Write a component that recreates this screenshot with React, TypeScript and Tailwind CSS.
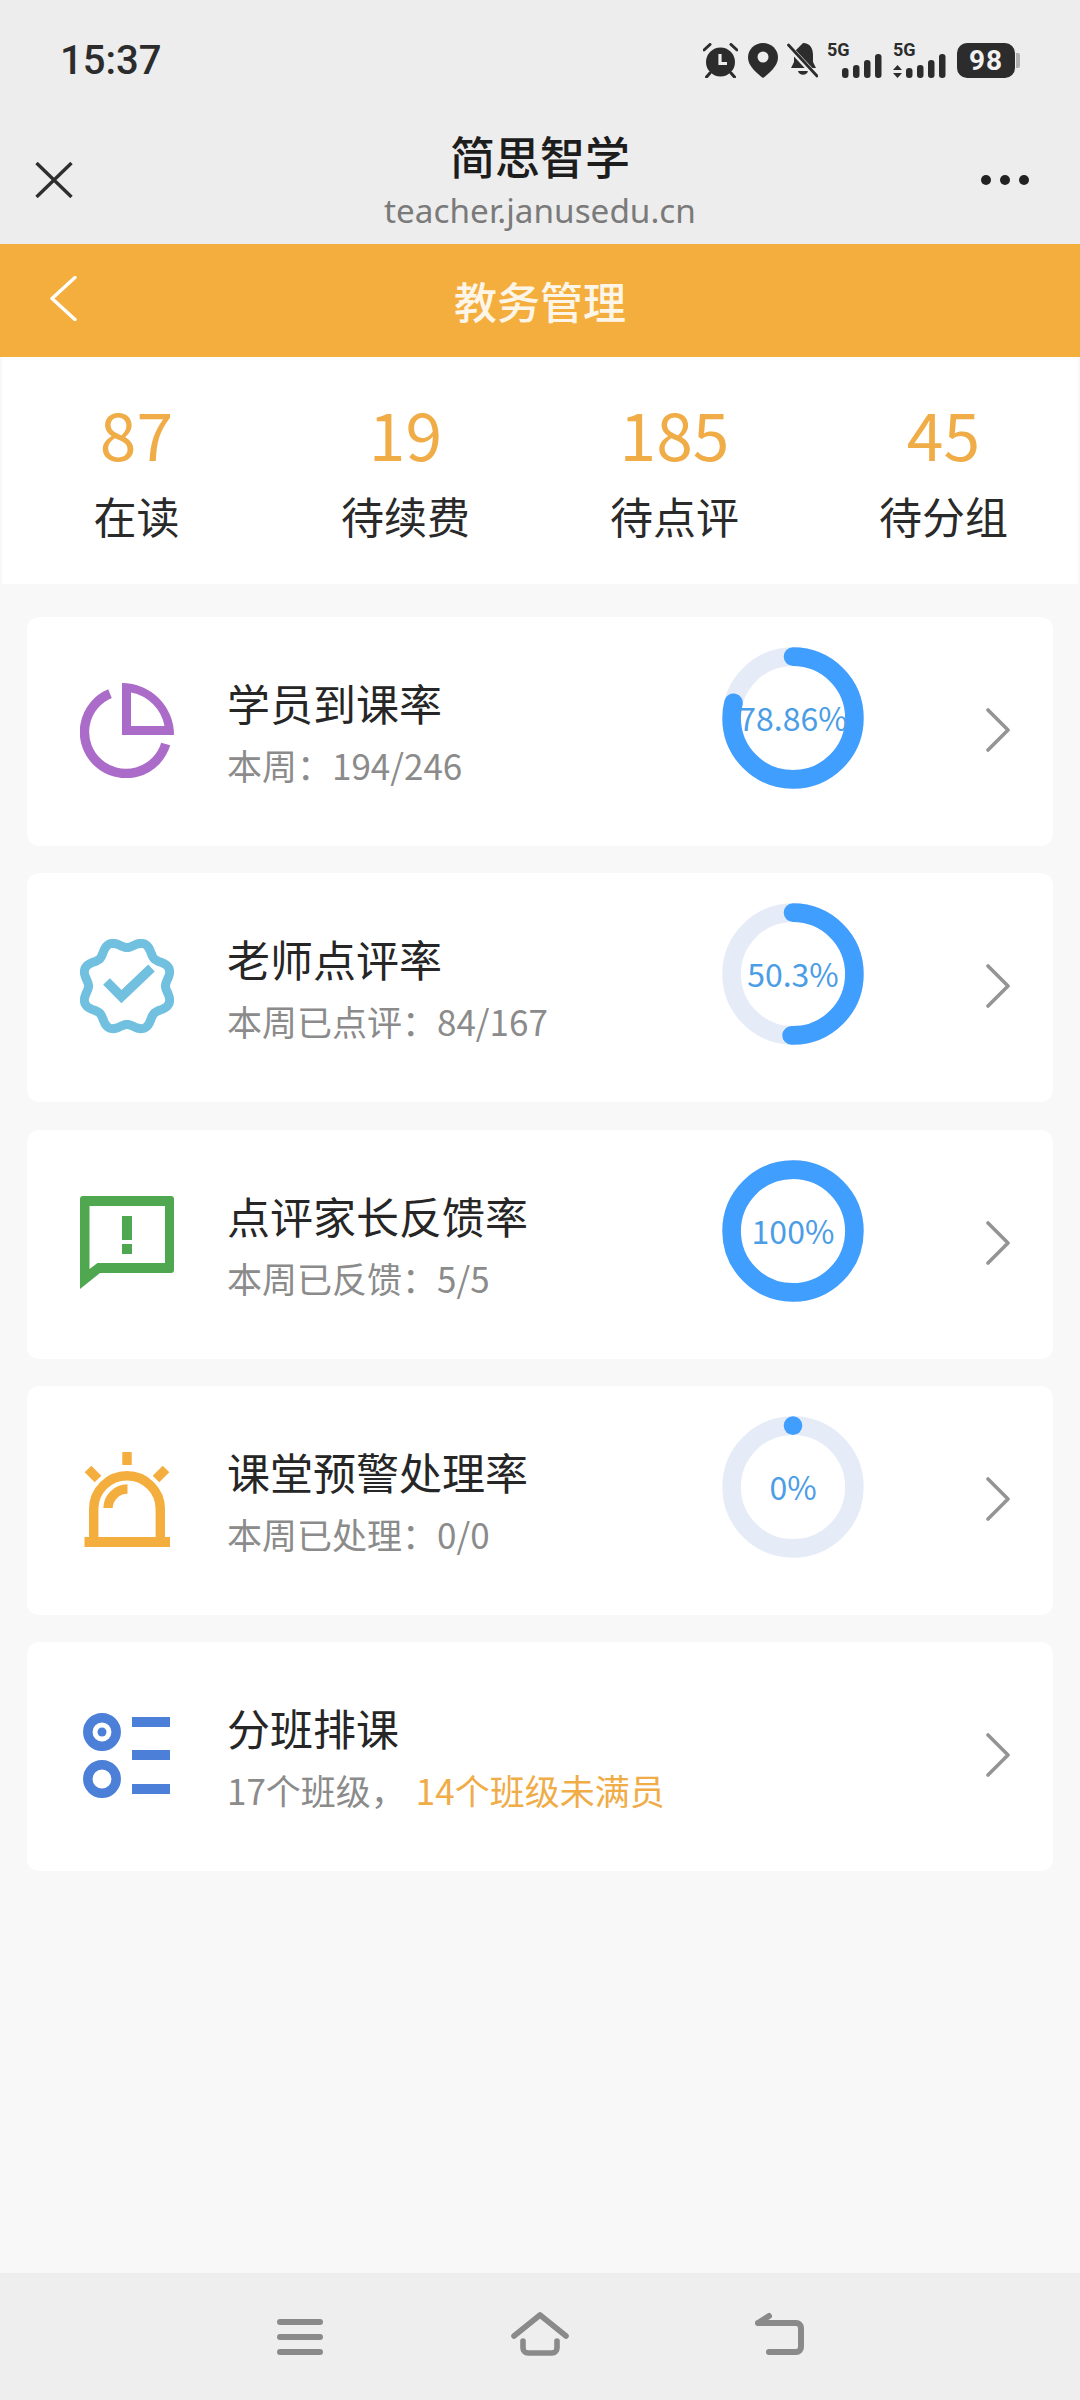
import type { ReactNode } from "react";

const FONT = "font-['Noto_Sans_CJK_SC','Noto_Sans',sans-serif]";

function Alarm() {
  return (
    <svg width="35" height="35" viewBox="0 0 35 35">
      <circle cx="17.5" cy="19" r="14.5" fill="#2c2c2c" />
      <path d="M1 7 L7 1.5 M34 7 L28 1.5 M7 30 L3.5 34 M28 30 L31.5 34" stroke="#2c2c2c" strokeWidth="3" strokeLinecap="round" />
      <path d="M17 11 V20.5 H24" stroke="#ededed" strokeWidth="3.2" fill="none" />
    </svg>
  );
}

function Pin() {
  return (
    <svg width="30" height="35" viewBox="0 0 30 35">
      <path d="M15 0 C23.5 0 30 6.5 30 14.5 C30 23 21 30.5 15 35 C9 30.5 0 23 0 14.5 C0 6.5 6.5 0 15 0 Z" fill="#2c2c2c" />
      <circle cx="15" cy="14" r="5.5" fill="#ededed" />
    </svg>
  );
}

function MutedBell() {
  return (
    <svg width="31" height="35" viewBox="0 0 31 35">
      <path d="M16 0 C23 0 26 5 26 12 V19 L29 25 H4 L7 19 V9 Z" fill="#2c2c2c" />
      <path d="M11 28 H21 C20 33 12 33 11 28 Z" fill="#2c2c2c" />
      <path d="M1 3 L29 33" stroke="#ededed" strokeWidth="5.5" />
      <path d="M1.5 2 L30 33" stroke="#2c2c2c" strokeWidth="2.8" strokeLinecap="round" />
    </svg>
  );
}

function SignalGroup({ arrows }: { arrows?: boolean }) {
  const bars = [
    { x: 0, y: 15, h: 10 },
    { x: 11, y: 12, h: 13 },
    { x: 22, y: 7, h: 18 },
    { x: 33, y: 1, h: 24 },
  ];
  return (
    <div className={`grid h-[35px] ${arrows ? "w-[53px]" : "w-[55px]"}`}>
      <span className="col-start-1 row-start-1 self-start justify-self-start font-['Roboto',sans-serif] text-[18px] leading-[14px] font-bold text-[#2c2c2c]">
        5G
      </span>
      <div className="col-start-1 row-start-1 flex items-end justify-between self-end">
        {arrows ? (
          <svg width="9" height="13" viewBox="0 0 9 13">
            <path d="M4.5 0 L9 5 H0 Z M0 8 H9 L4.5 13 Z" fill="#2c2c2c" />
          </svg>
        ) : (
          <span />
        )}
        <svg width="40" height="25" viewBox="0 0 40 25">
          {bars.map((b) => (
            <rect key={b.x} x={b.x} y={b.y} width="6.5" height={b.h} rx="3" fill="#2c2c2c" />
          ))}
        </svg>
      </div>
    </div>
  );
}

function Battery() {
  return (
    <div className="flex items-center">
      <div className="flex h-[35px] w-[58px] items-center justify-center rounded-[10px] bg-[#2c2c2c] font-['Roboto',sans-serif] text-[28px] font-bold tracking-[1px] text-[#f2f2f2]">
        98
      </div>
      <div className="ml-[1px] h-[15px] w-[4px] rounded-r-[2px] bg-[#b0b0b0]" />
    </div>
  );
}

function StatusBar() {
  return (
    <div className="flex h-[120px] items-start justify-between pt-[43px] pr-[60px] pl-[60px]">
      <span className="font-['Roboto',sans-serif] text-[40px] leading-[35px] font-medium text-[#2c2c2c]">15:37</span>
      <div className="flex items-start">
        <Alarm />
        <div className="ml-[10px]">
          <Pin />
        </div>
        <div className="ml-[9px]">
          <MutedBell />
        </div>
        <div className="ml-[9px]">
          <SignalGroup />
        </div>
        <div className="ml-[11px]">
          <SignalGroup arrows />
        </div>
        <div className="ml-[11px]">
          <Battery />
        </div>
      </div>
    </div>
  );
}

function WebViewBar() {
  return (
    <div className="grid h-[124px] grid-cols-[110px_1fr_110px] items-start">
      <div className="pt-[42px] pl-[35px]">
        <svg width="38" height="36" viewBox="0 0 38 36">
          <path d="M1.5 1 L36.5 35 M36.5 1 L1.5 35" stroke="#2e2e2e" strokeWidth="3.4" />
        </svg>
      </div>
      <div className="flex flex-col items-center">
        <span className="mt-[3px] text-[45px] leading-[66px] font-medium text-[#1d1d1d]">简思智学</span>
        <span className="mt-[-2px] font-['Noto_Sans',sans-serif] text-[33.3px] leading-[46px] text-[#7a7a7a]">teacher.janusedu.cn</span>
      </div>
      <div className="flex justify-end pt-[54px] pr-[50px]">
        <svg width="50" height="12" viewBox="0 0 50 12">
          <circle cx="6" cy="6" r="5" fill="#222" />
          <circle cx="25" cy="6" r="5" fill="#222" />
          <circle cx="44" cy="6" r="5" fill="#222" />
        </svg>
      </div>
    </div>
  );
}

function PageHeader() {
  return (
    <div className="grid h-[113px] grid-cols-[110px_1fr_110px] items-center bg-[#f4ae3e]">
      <div className="pb-[5px] pl-[50px]">
        <svg width="27" height="45" viewBox="0 0 27 45">
          <path d="M25 1.5 L2 22.5 L25 43.5" fill="none" stroke="#ffffff" strokeWidth="3.4" strokeLinecap="round" strokeLinejoin="round" />
        </svg>
      </div>
      <div className="mt-[-2px] text-center text-[43px] leading-[60px] font-medium text-[#fdf6e8]">教务管理</div>
      <div />
    </div>
  );
}

const STATS = [
  { value: "87", label: "在读" },
  { value: "19", label: "待续费" },
  { value: "185", label: "待点评" },
  { value: "45", label: "待分组" },
];

function StatsRow() {
  return (
    <div className="mx-[2px] grid h-[227px] grid-cols-4 bg-white pt-[27px]">
      {STATS.map((s) => (
        <div key={s.label} className="flex flex-col items-center">
          <span className="text-[66px] leading-[96px] text-[#efac47]">{s.value}</span>
          <span className="mt-[5px] text-[43px] leading-[60px] text-[#2a2a2a]">{s.label}</span>
        </div>
      ))}
    </div>
  );
}

function PieIcon() {
  return (
    <svg width="94" height="95" viewBox="0 0 94 95">
      <path d="M30 10.7 A41.5 41.5 0 1 0 85.7 61" fill="none" stroke="#ab6bc8" strokeWidth="9.4" />
      <path fillRule="evenodd" d="M42 0 A52 52 0 0 1 94 52 H42 Z M51 9.5 V43 H84.5 A42 42 0 0 0 51 9.5 Z" fill="#ab6bc8" />
    </svg>
  );
}

// Eight-lobed seal outline, sampled around the centre of the icon.
function sealPath() {
  const pts: string[] = [];
  for (let i = 0; i < 240; i++) {
    const a = (i / 240) * Math.PI * 2;
    const r = 42 + 3.5 * Math.cos(8 * (a - Math.PI / 8));
    pts.push(`${(47 + r * Math.cos(a)).toFixed(2)} ${(47 + r * Math.sin(a)).toFixed(2)}`);
  }
  return `M${pts.join(" L")} Z`;
}

function SealIcon() {
  return (
    <svg width="94" height="95" viewBox="0 0 94 95">
      <path d={sealPath()} fill="none" stroke="#72c0e0" strokeWidth="9" />
      <path d="M26.5 42.5 L41.5 57.5 L71.5 29" fill="none" stroke="#72c0e0" strokeWidth="9.5" />
    </svg>
  );
}

function FeedbackIcon() {
  return (
    <svg width="94" height="95" viewBox="0 0 94 95">
      <path
        fillRule="evenodd"
        d="M3 0 H91 A3 3 0 0 1 94 3 V74 A3 3 0 0 1 91 77 H20 L0 93 V3 A3 3 0 0 1 3 0 Z M9.5 10 V73 L17.5 67 H85 V10 Z"
        fill="#4fa84f"
      />
      <rect x="42" y="20" width="10" height="24" fill="#4fa84f" />
      <rect x="42" y="48" width="10" height="10" fill="#4fa84f" />
    </svg>
  );
}

function BeaconIcon() {
  return (
    <svg width="94" height="95" viewBox="0 0 94 95">
      <g fill="none" stroke="#f4ae3e" strokeWidth="9.4">
        <path d="M13.7 86 V57 A33.3 33.3 0 0 1 80.3 57 V86" />
        <path d="M28 56 A19.5 19.5 0 0 1 47.5 37" />
        <path d="M47 0 V13" />
        <path d="M8 17 L18 27" />
        <path d="M86 17 L76 27" />
      </g>
      <rect x="4.5" y="85" width="85.5" height="10" fill="#f4ae3e" />
    </svg>
  );
}

function ScheduleIcon() {
  return (
    <svg width="94" height="95" viewBox="0 0 94 95">
      <g fill="none" stroke="#4c80d8" strokeWidth="9.5">
        <circle cx="22" cy="24" r="14.2" />
        <circle cx="22" cy="71" r="14.2" />
      </g>
      <circle cx="22" cy="24" r="4.5" fill="#4c80d8" />
      <rect x="52" y="9" width="38" height="10" fill="#4c80d8" />
      <rect x="52" y="42" width="38" height="10" fill="#4c80d8" />
      <rect x="52" y="76" width="38" height="10" fill="#4c80d8" />
    </svg>
  );
}

function Ring({ percent, label }: { percent: number; label: string }) {
  const r = 61.4;
  const circ = 2 * Math.PI * r;
  const full = percent >= 100;
  return (
    <div className="mt-[30px] grid h-[142px] w-[142px] place-items-center">
      <svg className="col-start-1 row-start-1" width="142" height="142" viewBox="0 0 142 142">
        <circle cx="71" cy="71" r={r} fill="none" stroke="#e6ecf7" strokeWidth="18.6" />
        <circle
          cx="71"
          cy="71"
          r={r}
          fill="none"
          stroke="#409eff"
          strokeWidth="18.6"
          strokeLinecap={full ? "butt" : "round"}
          strokeDasharray={`${(circ * percent) / 100} ${circ}`}
          transform="rotate(-90 71 71)"
        />
      </svg>
      <span className="col-start-1 row-start-1 mt-[-2px] whitespace-nowrap text-[32px] leading-[46px] text-[#4b9de6]">{label}</span>
    </div>
  );
}

function Card({
  icon,
  title,
  sub,
  ring,
}: {
  icon: ReactNode;
  title: string;
  sub: ReactNode;
  ring?: { percent: number; label: string };
}) {
  return (
    <div className="flex h-[229px] rounded-[12px] bg-white">
      <div className="mt-[66px] ml-[53px] h-[95px] w-[94px] shrink-0">{icon}</div>
      <div className="ml-[53px] w-[495px] shrink-0 pt-[53px]">
        <div className="text-[43px] leading-[64px] text-[#262626]">{title}</div>
        <div className="text-[35px] leading-[62px] whitespace-nowrap text-[#8b8b8b]">{sub}</div>
      </div>
      <div className="w-[142px] shrink-0">{ring && <Ring percent={ring.percent} label={ring.label} />}</div>
      <div className="mt-[91px] ml-[122px]">
        <svg width="24" height="44" viewBox="0 0 24 44">
          <path d="M2 2 L22 22 L2 42" fill="none" stroke="#949494" strokeWidth="3.6" strokeLinecap="round" strokeLinejoin="round" />
        </svg>
      </div>
    </div>
  );
}

function NavBar() {
  return (
    <div className="flex h-[127px] items-start bg-[#eeeeee] pt-[39px] pl-[277px]">
      <svg width="46" height="45" viewBox="0 0 46 45">
        <path d="M3 10 H43 M3 25 H43 M3 40 H43" stroke="#8a8a8a" strokeWidth="6" strokeLinecap="round" />
      </svg>
      <svg className="ml-[188px]" width="58" height="45" viewBox="0 0 58 45">
        <path d="M3 24 L29 3 L55 24" fill="none" stroke="#8a8a8a" strokeWidth="5.6" strokeLinecap="round" strokeLinejoin="round" />
        <path d="M12 29 V36 A5 5 0 0 0 17 41 H41 A5 5 0 0 0 46 36 V29" fill="none" stroke="#8a8a8a" strokeWidth="5.6" strokeLinecap="round" />
      </svg>
      <svg className="ml-[186px]" width="49" height="45" viewBox="0 0 49 45">
        <path d="M3 11 L14 4 M3 11 H41 A5 5 0 0 1 46 16 V35 A5 5 0 0 1 41 40 H14" fill="none" stroke="#8a8a8a" strokeWidth="6" strokeLinecap="round" strokeLinejoin="round" />
      </svg>
    </div>
  );
}

export default function App() {
  return (
    <div className={`flex h-[2400px] w-[1080px] flex-col overflow-hidden bg-[#f8f8f8] ${FONT}`}>
      <div className="bg-[#ededed]">
        <StatusBar />
        <WebViewBar />
      </div>
      <PageHeader />
      <StatsRow />
      <main className="flex flex-1 flex-col gap-[27.25px] px-[27px] pt-[33px]">
        <Card icon={<PieIcon />} title="学员到课率" sub="本周：194/246" ring={{ percent: 78.86, label: "78.86%" }} />
        <Card icon={<SealIcon />} title="老师点评率" sub="本周已点评：84/167" ring={{ percent: 50.3, label: "50.3%" }} />
        <Card icon={<FeedbackIcon />} title="点评家长反馈率" sub="本周已反馈：5/5" ring={{ percent: 100, label: "100%" }} />
        <Card icon={<BeaconIcon />} title="课堂预警处理率" sub="本周已处理：0/0" ring={{ percent: 0, label: "0%" }} />
        <Card
          icon={<ScheduleIcon />}
          title="分班排课"
          sub={
            <>
              17个班级，<span className="ml-[10px] text-[#efac47]">14个班级未满员</span>
            </>
          }
        />
      </main>
      <NavBar />
    </div>
  );
}
